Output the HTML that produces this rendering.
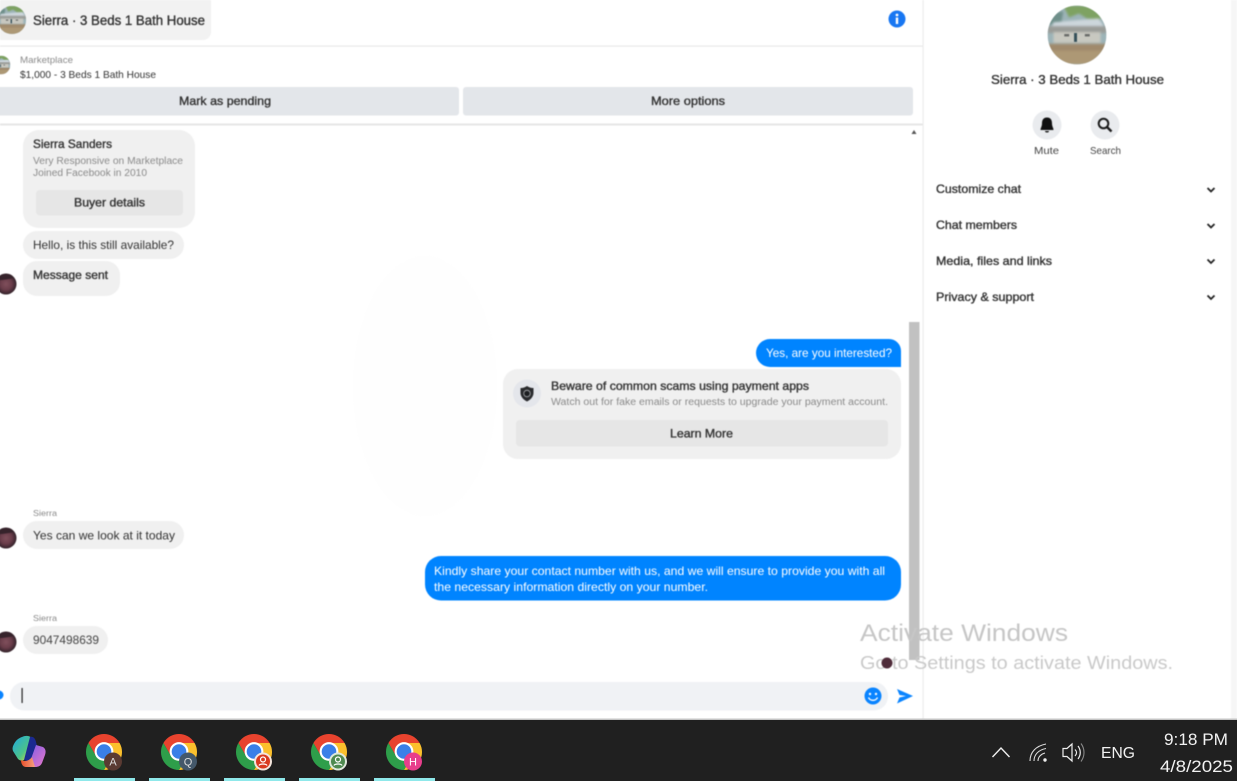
<!DOCTYPE html>
<html lang="en"><head><meta charset="utf-8"><title>Sierra · 3 Beds 1 Bath House</title>
<style>
html,body{margin:0;padding:0;width:1237px;height:781px;overflow:hidden;background:#fff}
svg{display:block}
text{font-family:"Liberation Sans",sans-serif;white-space:pre}
.b{stroke:#333;stroke-width:.36px}
</style></head><body>
<svg width="1237" height="781" viewBox="0 0 1237 781" xmlns="http://www.w3.org/2000/svg">
<defs>
<filter id="soft" x="-2%" y="-2%" width="104%" height="104%" color-interpolation-filters="sRGB"><feGaussianBlur stdDeviation="0.4"/></filter>
<filter id="soft2" x="-10%" y="-10%" width="120%" height="120%" color-interpolation-filters="sRGB"><feGaussianBlur stdDeviation="1.1"/></filter>
<clipPath id="hc"><circle cx="0" cy="0" r="30"/></clipPath>
<radialGradient id="fg" cx="50%" cy="50%" r="50%"><stop offset="0" stop-color="#80505c"/><stop offset=".55" stop-color="#6a3d4a"/><stop offset="1" stop-color="#33222a"/></radialGradient>
<g id="house"><g clip-path="url(#hc)">
<rect x="-30" y="-30" width="60" height="60" fill="#9db4b8"/>
<g filter="url(#soft2)">
<path d="M-14,-30 H24 V-16 L10,-17 L2,-22 L-8,-18 Z" fill="#7ea262"/>
<path d="M-30,-22 L-14,-24 L-16,-13 L-30,-10 Z" fill="#6f8f8a"/>
<path d="M-24,-13 L22,-17 L28,-8 L-26,-8 Z" fill="#cdd6dc"/>
<rect x="-30" y="-9" width="60" height="7" fill="#9a9c98"/>
<rect x="-24" y="-3" width="48" height="11" fill="#c8c8c0"/>
<rect x="-30" y="9" width="60" height="21" fill="#a08a6c"/>
<rect x="-30" y="16" width="60" height="14" fill="#ad9875"/>
</g>
<rect x="-3" y="-2" width="3" height="9" fill="#35505a"/><rect x="-13" y="-1" width="5" height="2.500" fill="#6a6c6a"/><rect x="8" y="-1" width="5" height="2.500" fill="#6a6c6a"/>
</g></g>
<g id="face"><circle r="10.5" fill="url(#fg)"/><path d="M-9,-4 A10,10 0 0 1 8,-6 L3,-5 L-4,-4 Z" fill="#36232b"/></g>
<g id="chrome">
<path d="M-15.6,-9 A18,18 0 0 1 15.6,-9 L0,-9 L-7.8,4.5 Z" fill="#e8432e"/>
<path d="M15.6,-9 A18,18 0 0 1 0,18 L7.8,4.5 L0,-9 Z" fill="#fbc02d"/>
<path d="M0,18 A18,18 0 0 1 -15.6,-9 L-7.8,4.5 L7.8,4.5 Z" fill="#2e9e4a"/>
<circle cy="-.5" r="9.4" fill="#fff"/><circle cy="-.5" r="7.3" fill="#3a7fe8"/></g>
</defs>

<g filter="url(#soft)">
<!-- top bar -->
<path d="M0,0 H211 V32 A8,8 0 0 1 203,40 H0 Z" fill="#f2f2f2"/>
<use href="#house" transform="translate(12,20) scale(.47)"/>
<text x="33" y="25" class="b" font-size="13.5" fill="#333" textLength="172" lengthAdjust="spacingAndGlyphs">Sierra · 3 Beds 1 Bath House</text>
<circle cx="897" cy="19" r="8.5" fill="#1877f2"/><circle cx="897" cy="15" r="1.4" fill="#fff"/><rect x="895.8" y="17.5" width="2.4" height="6.5" fill="#fff"/>
<rect x="0" y="45.500" width="923" height="1.200" fill="#e8e8e8"/>
<use href="#house" transform="translate(1,65) scale(.31)"/>
<text x="20" y="63" font-size="9.500" fill="#8a8a8a" textLength="53" lengthAdjust="spacingAndGlyphs">Marketplace</text>
<text x="20" y="78" font-size="10.500" fill="#333" textLength="136" lengthAdjust="spacingAndGlyphs">$1,000 - 3 Beds 1 Bath House</text>
<rect x="-6" y="87" width="465" height="28.500" rx="3" fill="#e3e6ea"/>
<rect x="463" y="87" width="450" height="28.500" rx="3" fill="#e3e6ea"/>
<text x="179" y="105" class="b" font-size="12" fill="#333" textLength="92" lengthAdjust="spacingAndGlyphs">Mark as pending</text>
<text x="651" y="105" class="b" font-size="12" fill="#333" textLength="74" lengthAdjust="spacingAndGlyphs">More options</text>
<rect x="0" y="123.500" width="923" height="2" fill="#e6e6e6"/>

<!-- faint watermark -->
<ellipse cx="425" cy="386" rx="72" ry="130" fill="#fefefe"/>

<!-- scrollbar -->
<path d="M911.500,134 L914,130 L916.500,134 Z" fill="#555"/>
<rect x="909" y="322" width="10.500" height="338" fill="#c1c1c1"/>
<rect x="922.500" y="0" width="1.200" height="719" fill="#ececec"/>
<rect x="1231" y="0" width="6" height="719" fill="#f6f6f6"/>

<!-- left messages -->
<rect x="23" y="130" width="172" height="98" rx="16" fill="#f0f0f0"/>
<text x="33" y="148" class="b" font-size="12" fill="#333" textLength="79" lengthAdjust="spacingAndGlyphs">Sierra Sanders</text>
<text x="33" y="164" font-size="10" fill="#8a8a8a" textLength="150" lengthAdjust="spacingAndGlyphs">Very Responsive on Marketplace</text>
<text x="33" y="176" font-size="10" fill="#8a8a8a" textLength="114" lengthAdjust="spacingAndGlyphs">Joined Facebook in 2010</text>
<rect x="36" y="190" width="147" height="25.500" rx="4" fill="#e6e6e6"/>
<text x="74" y="206.500" class="b" font-size="12" fill="#333" textLength="71" lengthAdjust="spacingAndGlyphs">Buyer details</text>
<rect x="23" y="231" width="161" height="28" rx="14" fill="#f0f0f0"/>
<text x="33" y="249" font-size="12" fill="#333" textLength="141" lengthAdjust="spacingAndGlyphs">Hello, is this still available?</text>
<rect x="23" y="261" width="97" height="35" rx="14" fill="#f0f0f0"/>
<text x="33" y="279" class="b" font-size="12" fill="#333" textLength="75" lengthAdjust="spacingAndGlyphs">Message sent</text>
<use href="#face" transform="translate(6,284)"/>

<text x="33" y="516" font-size="8.500" fill="#888" textLength="24" lengthAdjust="spacingAndGlyphs">Sierra</text>
<rect x="23" y="521" width="161" height="28" rx="14" fill="#f0f0f0"/>
<text x="33" y="539.500" font-size="12" fill="#333" textLength="142" lengthAdjust="spacingAndGlyphs">Yes can we look at it today</text>
<use href="#face" transform="translate(6,538)"/>

<text x="33" y="621" font-size="8.500" fill="#888" textLength="24" lengthAdjust="spacingAndGlyphs">Sierra</text>
<rect x="23" y="626" width="85" height="28" rx="14" fill="#f0f0f0"/>
<text x="33" y="644" font-size="12" fill="#444" textLength="66" lengthAdjust="spacingAndGlyphs">9047498639</text>
<use href="#face" transform="translate(6,642)"/>

<!-- right messages -->
<path d="M770,339 H889 A12,12 0 0 1 901,351 V367 H770 A14,14 0 0 1 770,339 Z" fill="#0084ff"/>
<text x="766" y="357" font-size="12" fill="#fff" textLength="126" lengthAdjust="spacingAndGlyphs">Yes, are you interested?</text>
<rect x="503" y="369" width="398" height="90" rx="15" fill="#f0f0f0"/>
<circle cx="527" cy="393.500" r="14" fill="#e4e6eb"/>
<path d="M527,386 C530,388 532,388 533.500,388 V393 C533.500,397 530,400 527,401.500 C524,400 520.500,397 520.500,393 V388 C522,388 524,388 527,386 Z" fill="#2a2b2e"/>
<circle cx="527" cy="393.500" r="3.700" fill="#a0a2a6"/><circle cx="527" cy="393.500" r="2.800" fill="#1c1e21"/>
<text x="551" y="390" class="b" font-size="12" fill="#333" textLength="258" lengthAdjust="spacingAndGlyphs">Beware of common scams using payment apps</text>
<text x="551" y="405" font-size="10" fill="#8a8a8a" textLength="337" lengthAdjust="spacingAndGlyphs">Watch out for fake emails or requests to upgrade your payment account.</text>
<rect x="516" y="420" width="372" height="26.500" rx="4" fill="#e6e6e6"/>
<text x="670" y="437.500" class="b" font-size="12" fill="#333" textLength="63" lengthAdjust="spacingAndGlyphs">Learn More</text>

<rect x="425" y="556" width="476" height="44.500" rx="16" fill="#0084ff"/>
<text x="434" y="575" font-size="12" fill="#fff" textLength="451" lengthAdjust="spacingAndGlyphs">Kindly share your contact number with us, and we will ensure to provide you with all</text>
<text x="434" y="591" font-size="12" fill="#fff" textLength="274" lengthAdjust="spacingAndGlyphs">the necessary information directly on your number.</text>

<!-- composer -->
<circle cx="-1" cy="695" r="4.500" fill="#0a84ff"/>
<rect x="10" y="682" width="878" height="28.500" rx="14" fill="#f0f2f5"/>
<rect x="21.500" y="688" width="1.200" height="15" fill="#222"/>
<circle cx="873" cy="696" r="8.500" fill="#0a84ff"/>
<circle cx="870" cy="694" r="1.200" fill="#fff"/><circle cx="876" cy="694" r="1.200" fill="#fff"/>
<path d="M868.500,697.500 A5,5 0 0 0 877.500,697.500" fill="none" stroke="#fff" stroke-width="1.400"/>
<path d="M897,689 L913,696 L897,703.500 L899.500,697.500 L906,696 L899.500,695 Z" fill="#0a84ff"/>

<!-- right sidebar -->
<use href="#house" transform="translate(1077,35) scale(.98)"/>
<text x="991" y="84" class="b" font-size="13" fill="#333" textLength="173" lengthAdjust="spacingAndGlyphs">Sierra · 3 Beds 1 Bath House</text>
<circle cx="1047" cy="125" r="14.500" fill="#e9ebee"/><circle cx="1105" cy="125" r="14.500" fill="#e9ebee"/>
<path d="M1047,117.500 C1051,117.500 1052,120.500 1052,123.500 C1052,126.500 1053.500,128 1053.500,130 H1040.500 C1040.500,128 1042,126.500 1042,123.500 C1042,120.500 1043,117.500 1047,117.500 Z" fill="#111"/>
<path d="M1045,131 H1049 A2,1.500 0 0 1 1045,131 Z" fill="#111"/>
<circle cx="1103.500" cy="123.500" r="4.800" fill="none" stroke="#1c1c1c" stroke-width="2"/>
<path d="M1107,127 L1111.500,131.500" stroke="#1c1c1c" stroke-width="2.400"/>
<text x="1034" y="154" font-size="10.500" fill="#444" textLength="25" lengthAdjust="spacingAndGlyphs">Mute</text>
<text x="1090" y="154" font-size="10.500" fill="#444" textLength="31" lengthAdjust="spacingAndGlyphs">Search</text>
<text x="936" y="193" class="b" font-size="12" fill="#333" textLength="85" lengthAdjust="spacingAndGlyphs">Customize chat</text>
<text x="936" y="229" class="b" font-size="12" fill="#333" textLength="81" lengthAdjust="spacingAndGlyphs">Chat members</text>
<text x="936" y="265" class="b" font-size="12" fill="#333" textLength="116" lengthAdjust="spacingAndGlyphs">Media, files and links</text>
<text x="936" y="301" class="b" font-size="12" fill="#333" textLength="98" lengthAdjust="spacingAndGlyphs">Privacy &amp; support</text>
<g fill="none" stroke="#222" stroke-width="1.800">
<path d="M1207.500,188 L1211,191.500 L1214.500,188"/>
<path d="M1207.500,224 L1211,227.500 L1214.500,224"/>
<path d="M1207.500,259.500 L1211,263 L1214.500,259.500"/>
<path d="M1207.500,295.500 L1211,299 L1214.500,295.500"/>
</g>

<!-- activation watermark -->
<text x="860" y="641" font-size="24" fill="#c6c6c6" textLength="208" lengthAdjust="spacingAndGlyphs">Activate Windows</text>
<text x="860" y="669" font-size="18" fill="#c9c9c9" textLength="313" lengthAdjust="spacingAndGlyphs">Go to Settings to activate Windows.</text>
<circle cx="887" cy="663" r="5.500" fill="#4f2c3a"/>
</g>

<!-- taskbar -->
<rect x="0" y="718.500" width="1237" height="1.500" fill="#c4c4c4"/>
<rect x="0" y="720" width="1237" height="61" fill="#202020"/>
<linearGradient id="cp1" x1="0" y1="0" x2="1" y2="1"><stop offset="0" stop-color="#1fa8e0"/><stop offset=".6" stop-color="#4cc38a"/><stop offset="1" stop-color="#f0d83a"/></linearGradient>
<linearGradient id="cp2" x1="0" y1="0" x2="1" y2="1"><stop offset="0" stop-color="#7a5be8"/><stop offset="1" stop-color="#e878c8"/></linearGradient>
<linearGradient id="cp3" x1="0" y1="0" x2="1" y2="0"><stop offset="0" stop-color="#e8502a"/><stop offset="1" stop-color="#f4a080"/></linearGradient>
<path d="M22,737 C26,735 30,736 32,738 L26,757 C24,762 20,761 18,759 L13,751 C12,748 13,746 14,744 C16,740 19,738 22,737 Z" fill="url(#cp1)"/>
<path d="M30,737 C33,736 35,738 36,742 L37,746 L31,762 L24,760 Z" fill="#1b2a90"/>
<path d="M36,745 L43,747 C46,749 46,752 45,755 L42,763 C40,767 37,767 34,767 L27,767 L31,759 Z" fill="url(#cp2)"/>
<path d="M21,760 C25,762 29,761 32,757 L35,767 L26,767 C23,767 21,764 21,760 Z" fill="url(#cp3)"/>
<use href="#chrome" transform="translate(104,752)"/><use href="#chrome" transform="translate(179,752)"/><use href="#chrome" transform="translate(254,752)"/><use href="#chrome" transform="translate(329,752)"/><use href="#chrome" transform="translate(404,752)"/>
<circle cx="113" cy="761.500" r="9" fill="#5a3a32"/><text x="113" y="765.500" font-size="11" fill="#ddd" text-anchor="middle">A</text>
<circle cx="188" cy="761.500" r="9" fill="#44586a"/><text x="188" y="765.500" font-size="11" fill="#ddd" text-anchor="middle">Q</text>
<circle cx="263" cy="761.500" r="9" fill="#f3e4dc"/><circle cx="263" cy="761.500" r="7" fill="#d93a20"/><circle cx="263" cy="759.500" r="2.500" fill="none" stroke="#fff" stroke-width="1.200"/><path d="M259,765.500 C260,763.500 266,763.500 267,765.500" fill="none" stroke="#fff" stroke-width="1.200"/>
<circle cx="338" cy="761.500" r="9" fill="#dfe8dc"/><circle cx="338" cy="761.500" r="7" fill="#4f8a50"/><circle cx="338" cy="759.500" r="2.500" fill="none" stroke="#fff" stroke-width="1.200"/><path d="M334,765.500 C335,763.500 341,763.500 342,765.500" fill="none" stroke="#fff" stroke-width="1.200"/>
<circle cx="413" cy="761.500" r="9" fill="#e83e8c"/><text x="413" y="765.500" font-size="11" fill="#fff" text-anchor="middle">H</text>
<g fill="#8fe8ea"><rect x="74" y="778" width="61" height="3"/><rect x="149" y="778" width="61" height="3"/><rect x="224" y="778" width="61" height="3"/><rect x="299" y="778" width="61" height="3"/><rect x="374" y="778" width="61" height="3"/></g>

<!-- tray -->
<path d="M992.500,757 L1001,748 L1009.500,757" fill="none" stroke="#eee" stroke-width="1.400"/>
<g fill="none" stroke="#ddd" stroke-width="1.100">
<path d="M1030,761 C1030,752 1036,746 1046,744"/><path d="M1034,761 C1034,755 1038,750 1046,748.500"/><path d="M1038,761 C1038,757 1041,754 1045,753"/>
</g>
<circle cx="1045" cy="760" r="1.700" fill="#eee"/>
<path d="M1063,748.500 H1067 L1072,744 V761 L1067,756.500 H1063 Z" fill="none" stroke="#eee" stroke-width="1.200"/>
<path d="M1075,749.500 C1077,751.500 1077,754 1075,756" fill="none" stroke="#eee" stroke-width="1.200"/>
<path d="M1078,746 C1081,750 1081,755 1078,759" fill="none" stroke="#eee" stroke-width="1.200"/>
<path d="M1081,743.500 C1085,749 1085,756 1081,761.500" fill="none" stroke="#888" stroke-width="1.100"/>
<text x="1101" y="758" font-size="16" fill="#f2f2f2" textLength="34" lengthAdjust="spacingAndGlyphs">ENG</text>
<text x="1164" y="745" font-size="17" fill="#f2f2f2" textLength="64" lengthAdjust="spacingAndGlyphs">9:18 PM</text>
<text x="1160" y="772" font-size="17" fill="#f2f2f2" textLength="73" lengthAdjust="spacingAndGlyphs">4/8/2025</text>
</svg>
</body></html>
